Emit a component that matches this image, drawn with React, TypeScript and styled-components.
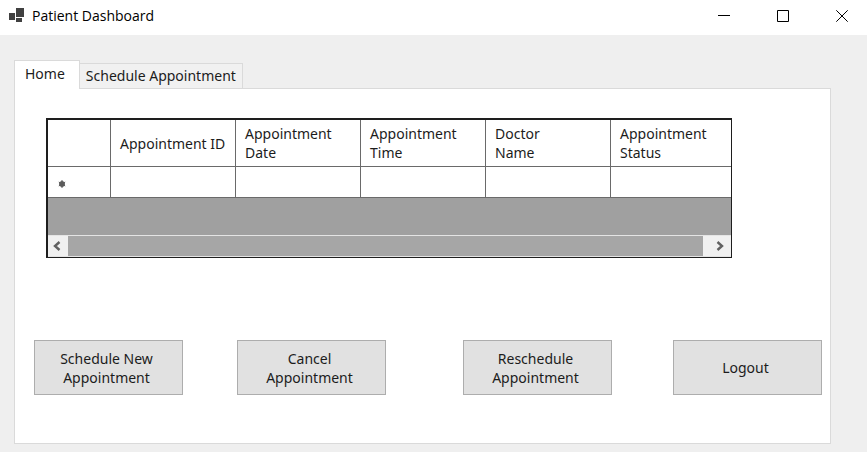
import React from "react";
import styled, { createGlobalStyle } from "styled-components";

const GlobalStyle = createGlobalStyle`
  *, *::before, *::after { box-sizing: border-box; }
  body {
    margin: 0;
    background: #efefef;
    color: #1c1c1c;
    font: 14px/19px "Noto Sans", "Open Sans", sans-serif;
  }
  button { font: inherit; color: inherit; }
`;

const TitleBar = styled.header`
  display: flex;
  align-items: center;
  gap: 9px;
  height: 35px;
  padding: 0 0 4px 9px;
  background: #fff;
`;

const AppIcon = styled.svg`
  width: 15px;
  height: 15px;
`;

const Title = styled.h1`
  flex: 1;
  margin: 0 0 0 -1px;
  color: #000;
  font-family: "Open Sans", sans-serif;
  font-size: 14px;
  font-weight: 400;
`;

const WindowButton = styled.button`
  display: grid;
  place-items: center;
  width: 50px;
  height: 30px;
  padding: 0;
  border: 0;
  background: transparent;
`;

const Glyph = styled.svg`
  width: 12px;
  height: 12px;
  fill: none;
  stroke: #000;
`;

const Content = styled.main`
  padding: 25px 36px 8px 14px;
`;

const TabList = styled.div`
  display: flex;
  align-items: flex-end;
`;

const Tab = styled.button<{ $active?: boolean }>`
  height: ${(p) => (p.$active ? 29 : 25)}px;
  margin-bottom: ${(p) => (p.$active ? -1 : 0)}px;
  padding: ${(p) => (p.$active ? "0 14px 4px 10px" : "0 6px 2px 6px")};
  border: 1px solid #dadada;
  border-bottom: 0;
  border-left-width: ${(p) => (p.$active ? 1 : 0)}px;
  background: ${(p) => (p.$active ? "#fff" : "#f1f1f1")};
  white-space: nowrap;
  z-index: ${(p) => (p.$active ? 1 : 0)};
`;

const Panel = styled.section`
  padding: 29px 8px 48px 19px;
  border: 1px solid #dadada;
  background: #fff;
`;

const DataGrid = styled.div`
  margin: 0 90px 82px 12px;
  border: 2px solid #1e1e1e;
  border-bottom-width: 1px;
  border-right-width: 1px;
  background: #a0a0a0;
  overflow: hidden;
`;

const Table = styled.table`
  width: 688px;
  min-width: 100%;
  table-layout: fixed;
  border-collapse: separate;
  border-spacing: 0;
  background: #fff;
`;

const Column = styled.col<{ $selector?: boolean }>`
  width: ${(p) => (p.$selector ? "63px" : "125px")};
`;

const cellLines = `
  border-right: 1px solid #6a6a6a;
  border-bottom: 1px solid #6a6a6a;
`;

const HeaderCell = styled.th`
  ${cellLines}
  height: 47px;
  padding: 0 0 0 9px;
  font-weight: 400;
  text-align: left;
  white-space: pre-line;
`;

const Cell = styled.td`
  ${cellLines}
  height: 31px;
  padding: 4px 0 0 10px;
`;

const RowMark = styled.svg`
  display: block;
  width: 8px;
  height: 8px;
  fill: #5c5c5c;
  stroke: #5c5c5c;
  stroke-width: 1;
`;

const ScrollBar = styled.div`
  display: flex;
  height: 22px;
  margin-top: 37px;
  border: solid #e4e4e4;
  border-width: 1px 0;
  background: #f0f0f0;
`;

const ScrollButton = styled.button`
  display: grid;
  place-items: center;
  width: 20px;
  padding: 0 2px 0 0;
  border: 0;
  background: transparent;
  &:last-child { width: 28px; padding: 0 0 0 6px; }
`;

const ScrollArrow = styled.svg`
  width: 8px;
  height: 10px;
  fill: none;
  stroke: #606060;
  stroke-width: 2.4;
`;

const Thumb = styled.div`
  flex: 1;
  background: #a6a6a6;
`;

const Actions = styled.div`
  display: grid;
  grid-template-columns: 203fr 226fr 210fr 149px;
`;

const ActionButton = styled.button`
  width: 149px;
  height: 55px;
  padding: 0 22px 0 18px;
  border: 1px solid #adadad;
  background: #e1e1e1;
`;

const columns = [
  "Appointment ID",
  "Appointment\nDate",
  "Appointment\nTime",
  "Doctor\nName",
  "Appointment\nStatus",
];

const actions = [
  "Schedule New Appointment",
  "Cancel Appointment",
  "Reschedule Appointment",
  "Logout",
];

export default function App() {
  return (
    <>
      <GlobalStyle />
      <TitleBar>
        <AppIcon viewBox="0 0 15 15" fill="#404040" aria-hidden="true">
          <path d="M7 0h8v9H7zM0 5h6v7H0zM7 10h6v4H7z" />
        </AppIcon>
        <Title>Patient Dashboard</Title>
        <WindowButton aria-label="Minimize">
          <Glyph viewBox="0 0 12 12"><path d="M0 5.5h12" /></Glyph>
        </WindowButton>
        <WindowButton aria-label="Maximize">
          <Glyph viewBox="0 0 12 12"><path d="M.5.5h11v11H.5z" /></Glyph>
        </WindowButton>
        <WindowButton aria-label="Close">
          <Glyph viewBox="0 0 12 12"><path d="M.3.3l11.4 11.4M11.7.3L.3 11.7" /></Glyph>
        </WindowButton>
      </TitleBar>
      <Content>
        <TabList role="tablist">
          <Tab $active role="tab" id="tab-home" aria-selected="true" aria-controls="panel-home">Home</Tab>
          <Tab role="tab" aria-selected="false">Schedule Appointment</Tab>
        </TabList>
        <Panel role="tabpanel" id="panel-home" aria-labelledby="tab-home">
          <DataGrid>
            <Table aria-label="Appointments">
              <colgroup>
                <Column $selector />
                {columns.map((name) => <Column key={name} />)}
              </colgroup>
              <thead>
                <tr>
                  <HeaderCell />
                  {columns.map((name) => (
                    <HeaderCell key={name} scope="col">{name}</HeaderCell>
                  ))}
                </tr>
              </thead>
              <tbody>
                <tr>
                  <Cell>
                    <RowMark viewBox="0 0 8 8" role="img" aria-label="New row">
                      <circle cx="4" cy="4" r="2.5" />
                      <path d="M4 0v8M.8 2l6.4 4M.8 6l6.4-4" />
                    </RowMark>
                  </Cell>
                  {columns.map((name) => <Cell key={name} />)}
                </tr>
              </tbody>
            </Table>
            <ScrollBar>
              <ScrollButton aria-label="Scroll left">
                <ScrollArrow viewBox="0 0 8 10"><path d="M6.5 1L2 5l4.5 4" /></ScrollArrow>
              </ScrollButton>
              <Thumb />
              <ScrollButton aria-label="Scroll right">
                <ScrollArrow viewBox="0 0 8 10"><path d="M1.5 1L6 5 1.5 9" /></ScrollArrow>
              </ScrollButton>
            </ScrollBar>
          </DataGrid>
          <Actions>
            {actions.map((label) => <ActionButton key={label}>{label}</ActionButton>)}
          </Actions>
        </Panel>
      </Content>
    </>
  );
}
